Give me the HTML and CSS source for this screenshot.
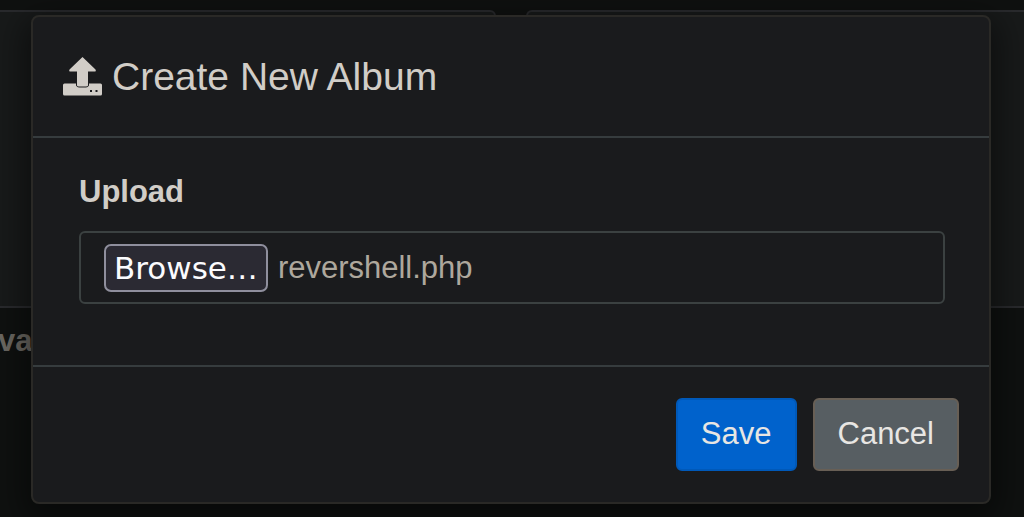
FILE: index.html
```html
<!DOCTYPE html>
<html lang="en">
<head>
<meta charset="utf-8">
<meta name="viewport" content="width=device-width, initial-scale=1">
<title>Create New Album</title>
<link rel="stylesheet" href="styles.css">
</head>
<body>
<main class="albums" aria-hidden="true">
  <section class="album">
    <div class="album-body"></div>
    <p class="album-name">vate</p>
  </section>
  <section class="album">
    <div class="album-body"></div>
  </section>
</main>
<div class="overlay">
  <form class="dialog" role="dialog" aria-modal="true" aria-labelledby="dialog-title">
    <header class="dialog-header">
      <svg class="icon" viewBox="0 0 39 39" aria-hidden="true">
        <path fill="currentColor" fill-rule="evenodd" d="M19.500 0 32.500 12.500Q33.500 14.500 31.500 14.500H25V28.500Q25 29.500 23 29.500H16Q14 29.500 14 28.500V14.500H7.500Q5.500 14.500 6.500 12.500ZM1.500 26.500H13V28.500Q14 30.500 16 30.500H23Q25 30.500 26 28.500V26.500H37.500Q39 26.500 39 28V37Q39 38.500 37.500 38.500H1.500Q0 38.500 0 37V28Q0 26.500 1.500 26.500ZM27 33V35H29V33ZM32.500 33V35H34.500V33Z"/>
      </svg>
      <h1 class="title" id="dialog-title">Create New Album</h1>
    </header>
    <div class="dialog-body">
      <label class="field-label" for="upload">Upload</label>
      <label class="file-field" for="upload">
        <input class="file-input" id="upload" type="file">
        <span class="browse">Browse…</span>
        <span class="file-name">revershell.php</span>
      </label>
    </div>
    <footer class="dialog-footer">
      <button class="button button-save" type="button">Save</button>
      <button class="button button-cancel" type="button">Cancel</button>
    </footer>
  </form>
</div>
</body>
</html>
```
FILE: styles.css
```css
* { box-sizing: border-box; }

body {
  margin: 0;
  background: #0f1110;
  color: #d1cdc7;
  font: 31px/48px "Liberation Sans", Arial, sans-serif;
}

.albums {
  display: grid;
  grid-template-columns: 1fr 1fr;
  gap: 28px;
  padding-top: 10px;
}

.album-body {
  height: 298px;
  background: #181a1a;
  border: 2px solid #292a2d;
}

.album:first-child .album-body {
  border-left: 0;
  border-top-right-radius: 6px;
  margin-right: 2px;
}

.album:last-child .album-body {
  border-right: 0;
  border-top-left-radius: 6px;
}

.album-name {
  margin: 9px 0 0 -2px;
  color: #6b6862;
  font-weight: bold;
}

.overlay {
  position: absolute;
  inset: 0;
  padding: 15px 33px 13px 31px;
  overflow: hidden;
}

.dialog {
  background: #1a1b1d;
  border: 2px solid #2a2926;
  border-radius: 8px;
  box-shadow: 0 10px 32px 8px rgba(0, 0, 0, 0.45);
}

.dialog-header {
  display: flex;
  align-items: center;
  gap: 10px;
  padding: 30px;
  border-bottom: 2px solid #363c3e;
}

.icon {
  width: 39px;
  height: 39px;
}

.title {
  margin: 0;
  font-size: 39px;
  line-height: 59px;
  font-weight: normal;
}

.dialog-body {
  padding: 30px 44px 61px 46px;
}

.field-label {
  display: block;
  margin-bottom: 15px;
  font-weight: bold;
}

.file-field {
  display: flex;
  align-items: center;
  gap: 10px;
  padding: 11px 23px 10px;
  border: 2px solid #3b4141;
  border-radius: 6px;
  color: #aea89d;
}

.file-input {
  position: absolute;
  width: 1px;
  height: 1px;
  opacity: 0;
}

.browse {
  padding: 0 8px;
  border: 2px solid #8f8f9d;
  border-radius: 7px;
  background: #2b2a33;
  color: #fbfbfe;
  font: 31px/44px "DejaVu Sans", sans-serif;
}

.dialog-footer {
  display: flex;
  justify-content: flex-end;
  gap: 16px;
  padding: 31px 30px;
  border-top: 2px solid #363c3e;
}

.button {
  padding: 11px 23px 13px;
  border: 2px solid;
  border-radius: 6px;
  color: #e8e6e3;
  font: 31px/45px "Liberation Sans", Arial, sans-serif;
}

.button-save {
  background: #0062cc;
  border-color: #0059b9;
}

.button-cancel {
  background: #575e62;
  border-color: #685f55;
}
```
